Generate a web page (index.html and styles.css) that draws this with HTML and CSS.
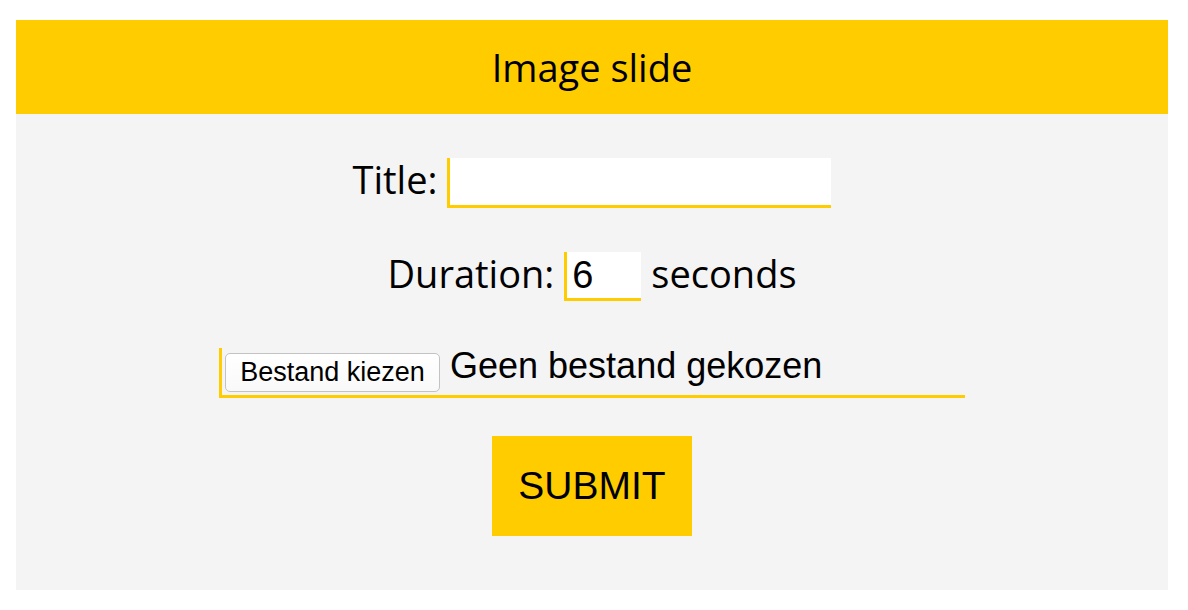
FILE: index.html
```html
<!DOCTYPE html>
<html>
<head>
<meta charset="utf-8">
<link rel="stylesheet" href="styles.css">
</head>
<body>
<div class="card">
  <div class="card-header">Image slide</div>
  <form class="card-body">
    <div class="row row-title">
      <label class="label">Title:</label>
      <input class="field field-title" type="text">
    </div>
    <div class="row row-duration">
      <label class="label">Duration:</label>
      <input class="field field-duration" type="text" value="6">
      <span class="label">seconds</span>
    </div>
    <div class="row row-file">
      <div class="file">
        <span class="file-button">Bestand kiezen</span>
        <span class="file-text">Geen bestand gekozen</span>
      </div>
    </div>
    <div class="row row-submit">
      <button class="submit" type="button">SUBMIT</button>
    </div>
  </form>
</div>
</body>
</html>
```

FILE: styles.css
```css
html, body {
  margin: 0;
  padding: 0;
  background: #ffffff;
}
body {
  padding: 20px 20px 20px 16px;
}
.card {
  width: 1152px;
  background: #f4f4f4;
}
.card-header {
  background: #ffcc00;
  height: 94px;
  display: flex;
  align-items: center;
  justify-content: center;
  font-family: "Open Sans", sans-serif;
  font-size: 38px;
  color: #000;
}
.card-body {
  display: flex;
  flex-direction: column;
  align-items: center;
  padding: 44px 0 54px;
  margin: 0;
}
.row {
  display: flex;
  align-items: baseline;
  gap: 10px;
}
.label {
  font-family: "Open Sans", sans-serif;
  font-size: 38px;
  line-height: 38px;
  color: #000;
}
.field {
  box-sizing: border-box;
  height: 50px;
  border: none;
  border-left: 3px solid #ffcc00;
  border-bottom: 3px solid #ffcc00;
  background: #fff;
  outline: none;
  margin: 0;
  padding: 0 0 0 5px;
  font-family: "Liberation Sans", Arial, sans-serif;
  font-size: 38px;
  color: #000;
}
.field-title {
  width: 384px;
}
.field-duration {
  width: 77px;
  height: 49px;
}
.row-title {
  margin-bottom: 44px;
}
.row-duration {
  margin-bottom: 47px;
}
.file {
  box-sizing: border-box;
  width: 746px;
  height: 50px;
  border-left: 3px solid #ffcc00;
  border-bottom: 3px solid #ffcc00;
  display: flex;
  align-items: flex-end;
  padding: 0 0 3px 3px;
  gap: 10px;
  font-family: "Liberation Sans", Arial, sans-serif;
}
.file-button {
  box-sizing: border-box;
  height: 39px;
  width: 215px;
  border: 1px solid #c3c3c3;
  border-radius: 5px;
  background: linear-gradient(#ffffff, #f9f9f9);
  font-size: 27px;
  display: flex;
  align-items: center;
  justify-content: center;
  color: #000;
}
.file-text {
  font-size: 36px;
  color: #000;
  align-self: flex-start;
  line-height: 36px;
}
.row-file {
  margin-bottom: 38px;
}
.submit {
  width: 200px;
  height: 100px;
  border: none;
  background: #ffcc00;
  font-family: "Liberation Sans", Arial, sans-serif;
  font-size: 39px;
  color: #000;
  padding: 0;
  margin: 0;
}
```
